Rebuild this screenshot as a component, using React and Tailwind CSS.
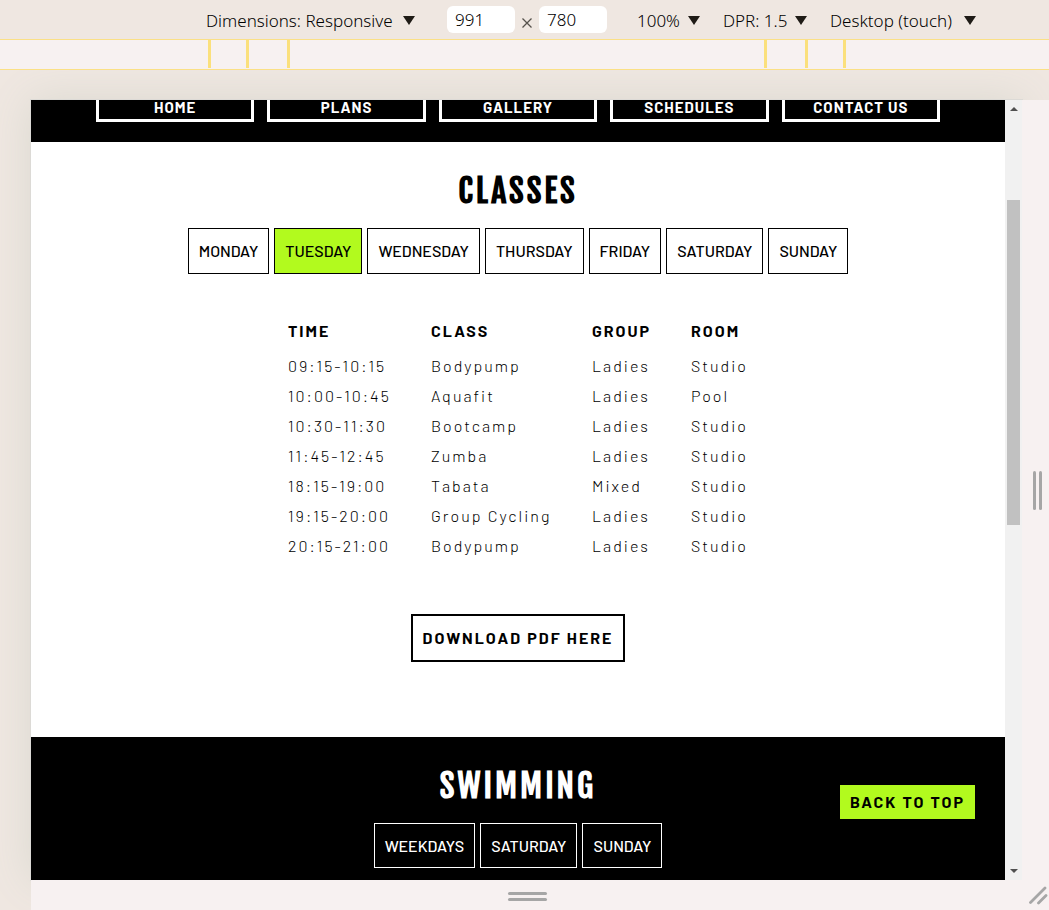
import React from "react";

const NAV = ["HOME", "PLANS", "GALLERY", "SCHEDULES", "CONTACT US"];
const DAYS = ["MONDAY", "TUESDAY", "WEDNESDAY", "THURSDAY", "FRIDAY", "SATURDAY", "SUNDAY"];
const SWIM_DAYS = ["WEEKDAYS", "SATURDAY", "SUNDAY"];
const ROWS = [
  ["09:15-10:15", "Bodypump", "Ladies", "Studio"],
  ["10:00-10:45", "Aquafit", "Ladies", "Pool"],
  ["10:30-11:30", "Bootcamp", "Ladies", "Studio"],
  ["11:45-12:45", "Zumba", "Ladies", "Studio"],
  ["18:15-19:00", "Tabata", "Mixed", "Studio"],
  ["19:15-20:00", "Group Cycling", "Ladies", "Studio"],
  ["20:15-21:00", "Bodypump", "Ladies", "Studio"],
];

function Picker({ label, value, className }) {
  return (
    <label className={"flex shrink-0 items-center " + className}>
      <select
        aria-label={label}
        defaultValue={value}
        className="flex-1 min-w-0 appearance-none bg-transparent text-black"
      >
        <option value={value}>{value}</option>
      </select>
      <svg width="12" height="9" viewBox="0 0 12 9" className="pointer-events-none shrink-0" aria-hidden="true">
        <path d="M0 0H12L6 9Z" fill="#1f1b16" />
      </svg>
    </label>
  );
}

function Size({ label, value }) {
  return (
    <input
      aria-label={label}
      defaultValue={value}
      className="h-[27px] w-[68px] shrink-0 rounded-md bg-white px-2 text-black"
    />
  );
}

function DeviceToolbar() {
  return (
    <div className="flex h-10 items-center border-b border-[#fbe086] pl-[206px] text-[17px] font-light font-['Segoe_UI','Noto_Sans',sans-serif]">
      <Picker label="Dimensions" value="Dimensions: Responsive" className="w-[209px] pt-[2px]" />
      <div className="ml-8 flex items-center">
        <Size label="Width" value="991" />
        <svg width="10" height="10" viewBox="0 0 10 10" className="mx-[7px] mt-[6px]" aria-hidden="true">
          <path d="M0.500 0.500L9.500 9.500M9.500 0.500L0.500 9.500" stroke="#56524c" strokeWidth="1.300" />
        </svg>
        <Size label="Height" value="780" />
      </div>
      <Picker label="Zoom" value="100%" className="ml-[30px] w-[63px] pt-[2px]" />
      <Picker label="Device pixel ratio" value="DPR: 1.5" className="ml-[23px] w-[84px] pt-[2px]" />
      <Picker label="Device type" value="Desktop (touch)" className="ml-[23px] w-[146px] pt-[2px]" />
    </div>
  );
}

function Marks() {
  return (
    <>
      <span className="w-[3px] bg-[#fbe07c]" />
      <span className="w-[3px] bg-[#fbe07c]" />
    </>
  );
}

function Ruler() {
  return (
    <div className="flex h-[30px] justify-center border-b border-[#fbe086] bg-[#f7f1f1] pb-px pl-[5px]">
      <div className="flex gap-[35px]">
        <Marks />
      </div>
      <span className="ml-[38px] w-[3px] bg-[#fbe07c]" />
      <span className="ml-[474px] w-[3px] bg-[#fbe07c]" />
      <div className="ml-[38px] flex gap-[35px]">
        <Marks />
      </div>
    </div>
  );
}

function Heading({ children }) {
  return (
    <h2 className="text-center text-[32px] leading-[48px] font-bold tracking-[3px] font-['Fjalla_One','Roboto_Condensed','Liberation_Sans_Narrow',sans-serif]">
      {children}
    </h2>
  );
}

function SitePage() {
  return (
    <div className="relative flex min-w-0 flex-1 flex-col bg-white text-black font-['Barlow',Roboto,sans-serif]">
      <nav className="grid grid-cols-5 gap-[13px] bg-black px-[65px] pb-5 text-white">
        {NAV.map((item) => (
          <a key={item} href="#top" className="border-3 border-t-0 border-white pb-1 text-center text-[15px] leading-[15px] font-bold tracking-[1px]">
            {item}
          </a>
        ))}
      </nav>

      <section className="flex flex-col items-center pt-[25px] pb-[75px]">
        <Heading>CLASSES</Heading>
        <div className="mt-[13px] flex gap-[5px]">
          {DAYS.map((day) => (
            <button
              key={day}
              type="button"
              className={
                "h-[46px] border border-black px-[10px] text-base font-medium " +
                (day === "TUESDAY" ? "bg-[#b2fa1e]" : "bg-white")
              }
            >
              {day}
            </button>
          ))}
        </div>
        <table className="mt-10 table-fixed border-collapse text-left text-base tracking-[2px] w-[460px]">
          <colgroup>
            <col className="w-[143px]" />
            <col className="w-[161px]" />
            <col className="w-[99px]" />
            <col className="w-[57px]" />
          </colgroup>
          <thead>
            <tr className="h-[37px] font-bold">
              {["TIME", "CLASS", "GROUP", "ROOM"].map((h) => (
                <th key={h} className="p-0 pb-1 whitespace-nowrap">{h}</th>
              ))}
            </tr>
          </thead>
          <tbody className="font-light">
            {ROWS.map((row) => (
              <tr key={row[0]} className="h-[30px]">
                {row.map((cell, i) => (
                  <td key={i} className="p-0 whitespace-nowrap">{cell}</td>
                ))}
              </tr>
            ))}
          </tbody>
        </table>
        <a href="#pdf" className="mt-[53px] border-2 border-black px-[10px] py-[10px] text-base leading-6 font-bold tracking-[2px]">
          DOWNLOAD PDF HERE
        </a>
      </section>

      <section className="flex flex-col items-center bg-black pt-[25px] pb-3 text-white">
        <Heading>SWIMMING</Heading>
        <div className="mt-[13px] flex gap-[5px]">
          {SWIM_DAYS.map((day) => (
            <button key={day} type="button" className="h-[45px] border border-white px-[10px] text-base font-medium">
              {day}
            </button>
          ))}
        </div>
      </section>

      <a href="#top" className="absolute right-[30px] bottom-[61px] bg-[#b2fa1e] px-[10px] py-[5px] text-base leading-6 font-bold tracking-[2px]">
        BACK TO TOP
      </a>
    </div>
  );
}

function Scrollbar() {
  return (
    <div className="flex w-[17px] flex-col items-center justify-between bg-[#f1f1f1] py-[7px]" aria-hidden="true">
      <svg width="8" height="4" viewBox="0 0 8 4">
        <path d="M0 4L4 0L8 4Z" fill="#505050" />
      </svg>
      <div className="mt-[89px] h-[325px] w-[13px] bg-[#c1c1c1]" />
      <div className="flex-1" />
      <svg width="8" height="4" viewBox="0 0 8 4">
        <path d="M0 0L4 4L8 0Z" fill="#505050" />
      </svg>
    </div>
  );
}

export default function App() {
  return (
    <div className="flex min-h-screen flex-col bg-[#efe7e1]">
      <DeviceToolbar />
      <Ruler />
      <main className="flex-1 overflow-hidden pt-[30px] pl-[31px]">
        <div className="flex">
          <div className="flex min-w-0 flex-1 shadow-[0_0_0_1px_#dcdad6,0_0_40px_#d9d8cf]">
            <SitePage />
            <Scrollbar />
          </div>
          <div className="relative flex w-[27px] items-center justify-center gap-[3px] bg-[#f7f1f1] pl-1">
            <span className="h-[39px] w-[3px] rounded-full bg-[#a6a6a6]" />
            <span className="h-[39px] w-[3px] rounded-full bg-[#a6a6a6]" />
          </div>
        </div>
        <div className="relative flex h-[30px] items-center bg-[#f7f1f1]">
          <div className="flex flex-1 flex-col items-center gap-[3px] pt-[3px] pr-[5px]">
            <span className="h-[3px] w-[39px] rounded-full bg-[#a6a6a6]" />
            <span className="h-[3px] w-[39px] rounded-full bg-[#a6a6a6]" />
          </div>
          <svg width="20" height="24" viewBox="0 0 20 24" className="self-end" aria-hidden="true">
            <path d="M1.500 16.500L16 2M9.500 17L17 9.500" stroke="#a6a6a6" strokeWidth="2.800" strokeLinecap="round" />
          </svg>
        </div>
      </main>
    </div>
  );
}
